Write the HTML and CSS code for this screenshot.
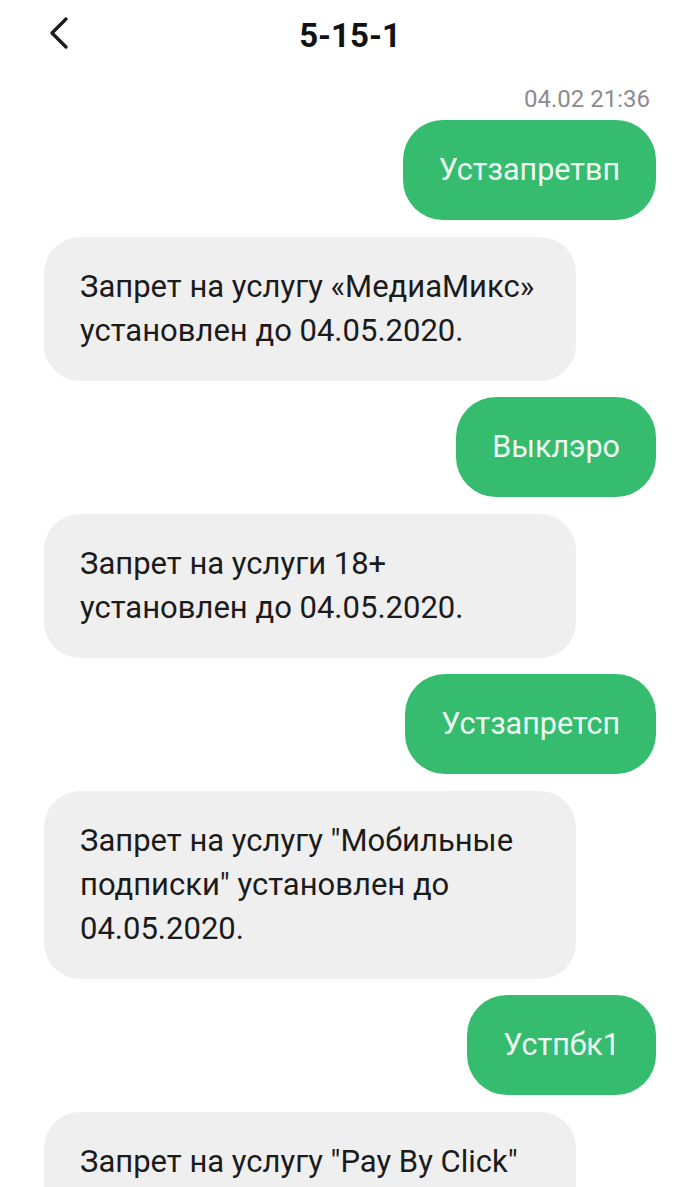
FILE: index.html
```html
<!DOCTYPE html>
<html lang="ru">
<head>
<meta charset="utf-8">
<title>5-15-1</title>
<link rel="stylesheet" href="styles.css">
</head>
<body>
<div class="screen">
  <header class="topbar">
    <svg class="back" width="24" height="36" viewBox="0 0 24 36">
      <path d="M19 4 L5 18 L19 32" fill="none" stroke="#1c1c1c" stroke-width="3.4" stroke-linecap="round" stroke-linejoin="round"/>
    </svg>
    <h1 class="title">5-15-1</h1>
  </header>
  <div class="time">04.02 21:36</div>
  <main class="thread">
    <div class="msg out">Устзапретвп</div>
    <div class="msg in">Запрет на услугу «МедиаМикс» установлен до 04.05.2020.</div>
    <div class="msg out">Выклэро</div>
    <div class="msg in">Запрет на услуги 18+<br>установлен до 04.05.2020.</div>
    <div class="msg out">Устзапретсп</div>
    <div class="msg in">Запрет на услугу "Мобильные подписки" установлен до 04.05.2020.</div>
    <div class="msg out">Устпбк1</div>
    <div class="msg in">Запрет на услугу "Pay By Click" установлен до 04.05.2020.</div>
  </main>
</div>
</body>
</html>
```
FILE: styles.css
```css
html, body {
  margin: 0;
  padding: 0;
  background: #ffffff;
}
body {
  font-family: Roboto, "Noto Sans", sans-serif;
  color: #1a1a1a;
  overflow: hidden;
  height: 1187px;
}
.screen {
  width: 700px;
}
.topbar {
  position: relative;
  height: 70px;
  display: flex;
  align-items: center;
  justify-content: center;
}
.back {
  position: absolute;
  left: 47px;
  top: 15px;
}
.title {
  margin: 0;
  font-size: 33px;
  font-weight: 700;
  color: #111;
}
.time {
  text-align: right;
  padding-right: 50px;
  font-size: 24px;
  color: #8c8c8c;
  line-height: 28px;
  margin-top: 15px;
  margin-bottom: 7px;
}
.thread {
  display: flex;
  flex-direction: column;
  gap: 16.5px;
  padding: 0 44px;
}
.msg {
  box-sizing: border-box;
  font-size: 31px;
  line-height: 44px;
  padding: 28px 36px;
  border-radius: 40px;
}
.out {
  align-self: flex-end;
  background: #35bc6e;
  color: #eefaf2;
  font-size: 30.5px;
}
.in {
  align-self: flex-start;
  width: 532px;
  background: #efefef;
  color: #1b1b1b;
  border-radius: 36px;
}
```
